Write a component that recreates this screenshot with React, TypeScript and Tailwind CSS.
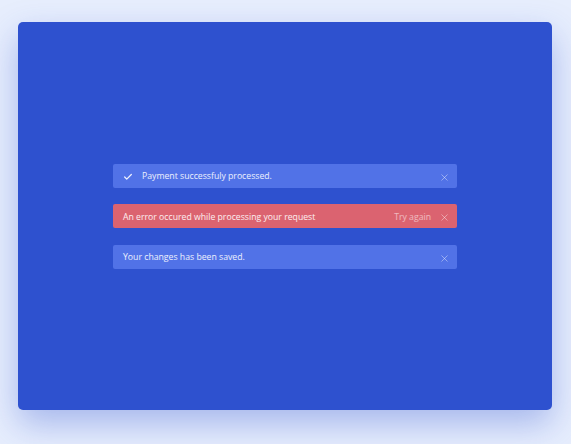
import { Check, X } from "lucide-react";

function Toast({
  tone,
  icon,
  text,
  action,
}: {
  tone: "info" | "error";
  icon?: boolean;
  text: string;
  action?: string;
}) {
  const bg = tone === "error" ? "bg-[#db6370]" : "bg-[#5172e7]";
  return (
    <div className={`${bg} h-6 w-[344px] rounded-[2px] flex items-center pt-[3px] pl-[10px] pr-[7px] text-[8.7px] text-white/90`}>
      {icon && <Check className="w-[10px] h-[10px] mr-[9px]" strokeWidth={3} />}
      <span className="flex-1">{text}</span>
      {action && <span className="text-white/55 mr-[8px]">{action}</span>}
      <X className="w-[11px] h-[11px] text-white/55" strokeWidth={1.6} />
    </div>
  );
}

export default function App() {
  return (
    <main
      className="w-[571px] h-[444px] bg-[#e7eefd] pt-[22px] pl-[18px]"
      style={{ fontFamily: '"Open Sans", "Noto Sans", sans-serif' }}
    >
      <section className="w-[534px] h-[388px] rounded-[5px] bg-[#2e51cf] shadow-[0_14px_34px_rgba(46,81,207,0.35)] flex flex-col items-center justify-center gap-[16.5px]">
        <Toast tone="info" icon text="Payment successfuly processed." />
        <Toast tone="error" text="An error occured while processing your request" action="Try again" />
        <Toast tone="info" text="Your changes has been saved." />
      </section>
    </main>
  );
}
